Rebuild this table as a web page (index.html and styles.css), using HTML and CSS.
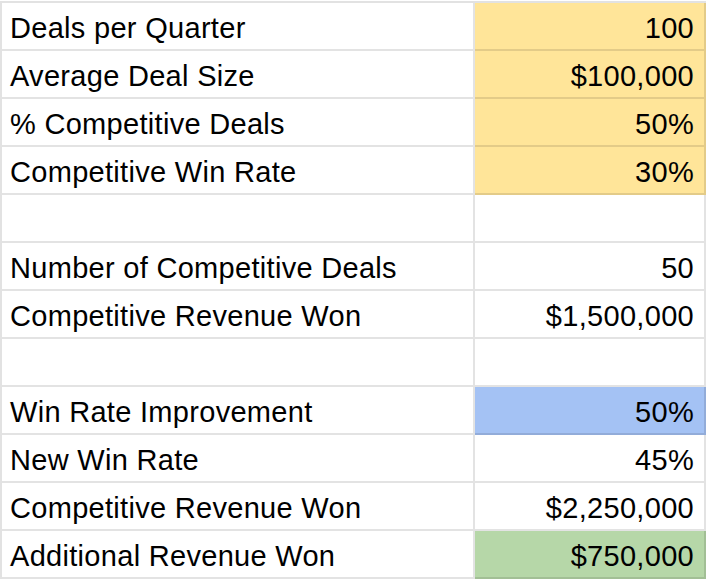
FILE: index.html
```html
<!DOCTYPE html>
<html>
<head>
<meta charset="utf-8">
<link rel="stylesheet" href="styles.css">
</head>
<body>
<div class="sheet">
  <div class="cell label">Deals per Quarter</div><div class="cell value yellow">100</div>
  <div class="cell label">Average Deal Size</div><div class="cell value yellow">$100,000</div>
  <div class="cell label">% Competitive Deals</div><div class="cell value yellow">50%</div>
  <div class="cell label">Competitive Win Rate</div><div class="cell value yellow">30%</div>
  <div class="cell label"></div><div class="cell value"></div>
  <div class="cell label">Number of Competitive Deals</div><div class="cell value">50</div>
  <div class="cell label">Competitive Revenue Won</div><div class="cell value">$1,500,000</div>
  <div class="cell label"></div><div class="cell value"></div>
  <div class="cell label">Win Rate Improvement</div><div class="cell value blue">50%</div>
  <div class="cell label">New Win Rate</div><div class="cell value">45%</div>
  <div class="cell label">Competitive Revenue Won</div><div class="cell value">$2,250,000</div>
  <div class="cell label">Additional Revenue Won</div><div class="cell value green">$750,000</div>
</div>
</body>
</html>
```
FILE: styles.css
```css
html, body {
  margin: 0;
  padding: 0;
  background: #ffffff;
}
body {
  font-family: "Liberation Sans", Arial, sans-serif;
  color: #000000;
}
.sheet {
  margin-top: 1px;
  width: 706px;
  display: grid;
  grid-template-columns: 473px 231px;
  grid-auto-rows: 48px;
  border-top: 2px solid #e2e2e2;
  border-left: 2px solid #e2e2e2;
  box-sizing: border-box;
}
.cell {
  box-sizing: border-box;
  border-right: 2px solid rgba(0, 0, 0, 0.11);
  border-bottom: 2px solid rgba(0, 0, 0, 0.11);
  font-size: 29px;
  letter-spacing: 0.3px;
  line-height: 42px;
  padding-top: 4px;
  white-space: nowrap;
  overflow: hidden;
}
.label {
  padding-left: 8px;
}
.value {
  text-align: right;
  padding-right: 10px;
}
.yellow { background: #ffe599; }
.blue { background: #a4c2f4; }
.green { background: #b6d7a8; }
```
